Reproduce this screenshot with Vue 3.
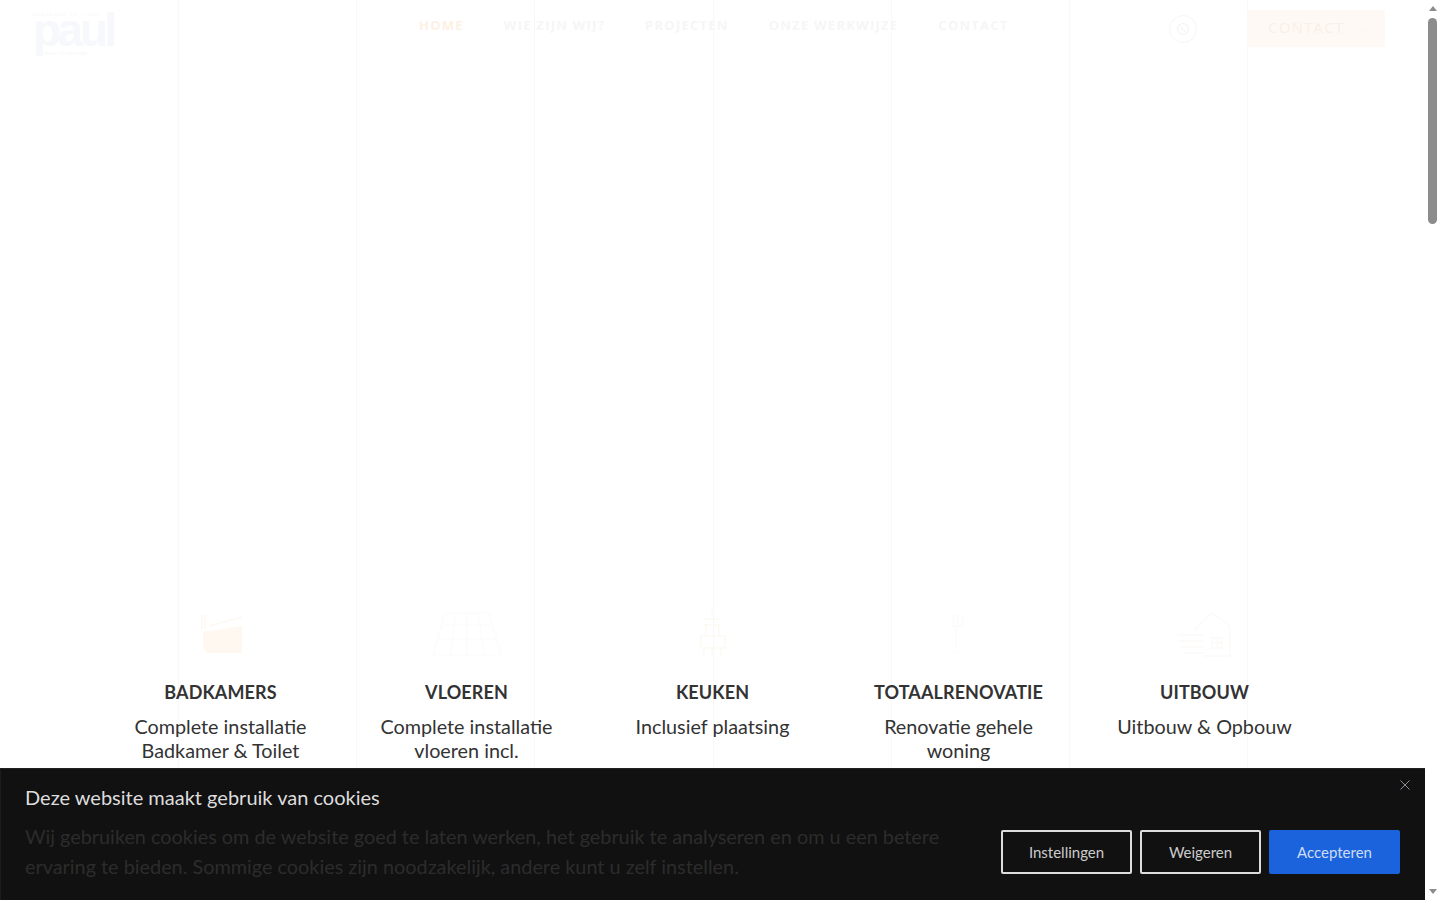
<script setup>
const navItems = [
  { label: 'HOME', active: true },
  { label: 'WIE ZIJN WIJ?' },
  { label: 'PROJECTEN' },
  { label: 'ONZE WERKWIJZE' },
  { label: 'CONTACT' },
]

const services = [
  { title: 'BADKAMERS', lines: ['Complete installatie', 'Badkamer & Toilet'], icon: 'bath' },
  { title: 'VLOEREN', lines: ['Complete installatie', 'vloeren incl.'], icon: 'floor' },
  { title: 'KEUKEN', lines: ['Inclusief plaatsing'], icon: 'kitchen' },
  { title: 'TOTAALRENOVATIE', lines: ['Renovatie gehele', 'woning'], icon: 'reno' },
  { title: 'UITBOUW', lines: ['Uitbouw & Opbouw'], icon: 'house' },
]
</script>

<template>
  <div class="page">
    <!-- faint column lines behind everything -->
    <div class="lines">
      <span v-for="n in 8" :key="n"></span>
    </div>

    <header class="topbar">
      <div class="logo">
        <span class="logo-top">BADKAMER EN VLOER</span>
        <span class="logo-word">paul</span>
        <span class="logo-sub">bouw- en renovatie</span>
      </div>
      <nav class="nav">
        <a v-for="item in navItems" :key="item.label" :class="{ active: item.active }">{{ item.label }}</a>
      </nav>
      <div class="actions">
        <span class="round">
          <svg width="14" height="14" viewBox="0 0 14 14" fill="none" stroke="#f3f3f3" stroke-width="1.2">
            <circle cx="7" cy="7" r="5.5" />
            <path d="M5 4.5 6 7 9 9.5" />
          </svg>
        </span>
        <a class="cta">CONTACT <i>→</i></a>
      </div>
    </header>

    <section class="services">
      <div v-for="s in services" :key="s.title" class="service">
        <div class="icon">
          <svg v-if="s.icon === 'bath'" width="48" height="44" viewBox="0 0 48 44" fill="none" stroke="#fdf8f2" stroke-width="1.5">
            <path d="M5 3v14M8 3v14M12 14 45 5" />
            <path d="M6 20 45 14V41H12Q7 41 6 32Z" fill="#fff8f1" stroke="none" />
          </svg>
          <svg v-else-if="s.icon === 'floor'" width="72" height="46" viewBox="0 0 72 46" fill="none" stroke="#fbfbfb" stroke-width="1.2">
            <path d="M14 2H58L70 44H2Z" />
            <path d="M25 2 19 44M36 2V44M47 2 53 44M11 14H61M7 28H65" />
          </svg>
          <svg v-else-if="s.icon === 'kitchen'" width="28" height="48" viewBox="0 0 28 48" fill="none" stroke="#fdfaf3" stroke-width="1.4">
            <path d="M13 0V6M4 9H22M4 15H22M7 15V26M20 15V26M2 26H26V38H2ZM5 38V47M13 38V47M22 38V47" />
          </svg>
          <svg v-else-if="s.icon === 'reno'" width="18" height="44" viewBox="0 0 18 44" fill="none" stroke="#fbfbfb" stroke-width="1.4">
            <path d="M3 2V14M8 2V14M13 2V14M3 14H13M6 14V36M6 40H9" />
          </svg>
          <svg v-else width="58" height="48" viewBox="0 0 58 48" fill="none" stroke="#fcfaf8" stroke-width="1.3">
            <path d="M2 25H28M2 31H28M4 37H28M8 43H28M18 20 36 3 54 16V46H28" />
            <path d="M36 28H46V38H36ZM41 28V38M36 33H46" />
          </svg>
        </div>
        <h3>{{ s.title }}</h3>
        <p>
          <span v-for="line in s.lines" :key="line">{{ line }}</span>
        </p>
      </div>
    </section>

    <aside class="cookie">
      <button class="close" aria-label="Sluiten">
        <svg width="10" height="10" viewBox="0 0 10 10" stroke="#8a8f98" stroke-width="1" fill="none">
          <path d="M.5.5 9.5 9.5M9.5.5.5 9.5" />
        </svg>
      </button>
      <h4>Deze website maakt gebruik van cookies</h4>
      <div class="cookie-row">
        <p>Wij gebruiken cookies om de website goed te laten werken, het gebruik te analyseren en om u een betere ervaring te bieden. Sommige cookies zijn noodzakelijk, andere kunt u zelf instellen.</p>
        <div class="buttons">
          <button class="btn wide">Instellingen</button>
          <button class="btn">Weigeren</button>
          <button class="btn wide primary">Accepteren</button>
        </div>
      </div>
    </aside>

    <div class="scrollbar">
      <span class="arrow up"></span>
      <span class="thumb"></span>
      <span class="arrow down"></span>
    </div>
  </div>
</template>

<style scoped>
.page {
  position: relative;
  height: 900px;
  overflow: hidden;
  background: #fff;
  font-family: Lato, "Noto Sans", sans-serif;
  color: #333;
}

.lines {
  position: absolute;
  top: 0;
  bottom: 0;
  left: 0;
  width: 1425px;
  display: grid;
  grid-template-columns: repeat(8, 1fr);
}
.lines span {
  border-left: 1px solid #f8f8f8;
}
.lines span:first-child {
  border-left: 0;
}

.topbar {
  position: relative;
  width: 1425px;
  height: 60px;
  display: flex;
  padding: 0 40px 0 33px;
  box-sizing: border-box;
}

.logo {
  width: 84px;
  height: 44px;
  margin-top: 12px;
  display: flex;
  flex-direction: column;
  color: #f6f8fb;
}
.logo-top {
  font-size: 4px;
  line-height: 5px;
  letter-spacing: 1.5px;
  white-space: nowrap;
}
.logo-word {
  font-family: "Liberation Sans", sans-serif;
  font-weight: 700;
  font-size: 46px;
  line-height: 26px;
  letter-spacing: -3.5px;
}
.logo-sub {
  margin-top: 7px;
  font-size: 5px;
  line-height: 7px;
  padding-left: 11px;
  white-space: nowrap;
}

.nav {
  display: flex;
  gap: 40px;
  margin-left: 302px;
  margin-top: 16px;
  height: 18px;
  font-family: "Open Sans", sans-serif;
  font-weight: 700;
  font-size: 13px;
  line-height: 18px;
  letter-spacing: 1.25px;
  color: #f6f6f6;
  white-space: nowrap;
}
.nav .active {
  color: #fdf1e4;
}

.actions {
  margin-left: auto;
  display: flex;
  align-items: flex-start;
}
.round {
  width: 26px;
  height: 26px;
  margin-top: 15px;
  margin-right: 50px;
  border: 1px solid #f6f6f6;
  border-radius: 50%;
  display: flex;
  align-items: center;
  justify-content: center;
}
.cta {
  width: 138px;
  height: 37px;
  margin-top: 10px;
  padding-left: 21px;
  box-sizing: border-box;
  background: #fff9f5;
  color: #f7efe8;
  font-family: "Open Sans", sans-serif;
  font-size: 15px;
  line-height: 35px;
  letter-spacing: 1.2px;
  white-space: nowrap;
}
.cta i {
  font-style: normal;
  color: #fdf6ef;
  margin-left: 8px;
}

.services {
  position: relative;
  width: 1230px;
  margin: 549px 0 0 97.5px;
  display: grid;
  grid-template-columns: repeat(5, 1fr);
}
.service {
  text-align: center;
}
.icon {
  height: 50px;
  padding-bottom: 12px;
  display: flex;
  align-items: center;
  justify-content: center;
}
.service h3 {
  margin: 9px 0 0;
  font-size: 18px;
  line-height: 24px;
  font-weight: 700;
  letter-spacing: 0.1px;
  color: #333;
}
.service p {
  margin: 10px 0 0;
  font-size: 19.8px;
  line-height: 24px;
  color: #333;
}
.service p span {
  display: block;
}

.cookie {
  position: absolute;
  left: 0;
  bottom: 0;
  width: 1425px;
  height: 132px;
  box-sizing: border-box;
  padding: 14px 25px 0 24px;
  background: #111;
  border-top: 1px solid #222;
  border-left: 1px solid #1c1c1c;
}
.cookie h4 {
  margin: 0;
  font-size: 20px;
  line-height: 28px;
  font-weight: 400;
  color: #ddd;
}
.close {
  position: absolute;
  top: 11px;
  right: 15px;
  width: 10px;
  height: 10px;
  padding: 0;
  border: 0;
  background: none;
  display: flex;
}
.cookie-row {
  display: flex;
  justify-content: space-between;
  align-items: flex-start;
  margin-top: 10px;
}
.cookie-row p {
  width: 930px;
  margin: 0;
  font-size: 19.85px;
  line-height: 30px;
  color: #2c2c2c;
}
.buttons {
  display: flex;
  gap: 8px;
  margin-top: 9px;
}
.btn {
  width: 121px;
  height: 44px;
  box-sizing: border-box;
  border: 2px solid #ddd;
  border-radius: 2px;
  background: transparent;
  color: #ccc;
  font-family: Lato, sans-serif;
  font-size: 15px;
}
.btn.wide {
  width: 131px;
}
.btn.primary {
  background: #1a63dc;
  border-color: #1a63dc;
  color: #cfdcf3;
}

.scrollbar {
  position: absolute;
  top: 0;
  right: 0;
  width: 15px;
  height: 900px;
  background: #fff;
  display: flex;
  flex-direction: column;
  align-items: center;
}
.thumb {
  width: 9px;
  height: 206px;
  margin-top: 7px;
  border-radius: 5px;
  background: #8c8c8c;
}
.arrow {
  width: 0;
  height: 0;
  border-left: 4.5px solid transparent;
  border-right: 4.5px solid transparent;
}
.arrow.up {
  margin-top: 6px;
  border-bottom: 5px solid #8c8c8c;
}
.arrow.down {
  margin-top: auto;
  margin-bottom: 6px;
  border-top: 5px solid #8c8c8c;
}
</style>
